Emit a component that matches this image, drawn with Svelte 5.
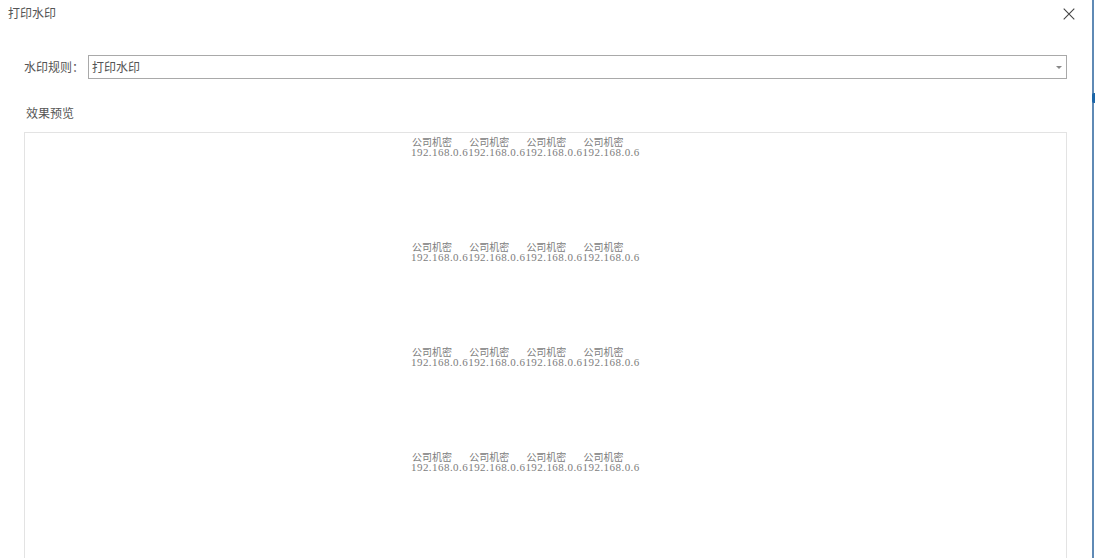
<script>
  const rows = [0, 1, 2, 3];
  const cols = [0, 1, 2, 3];
</script>

<div class="window">
  <div class="dialog">
    <header class="title-bar">
      <h1>打印水印</h1>
      <button class="close" aria-label="关闭">
        <svg width="12" height="12" viewBox="0 0 12 12"><path d="M.7.7l10.6 10.6M11.3.7L.7 11.3" /></svg>
      </button>
    </header>
    <div class="rule">
      <span class="label">水印规则：</span>
      <div class="select">
        <span>打印水印</span>
        <i class="caret"></i>
      </div>
    </div>
    <div class="preview-title">效果预览</div>
    <div class="preview">
      <div class="sheet">
        {#each rows as r}
          <div class="mark-row">
            {#each cols as c}
              <div class="mark"><span class="secret">公司机密</span><span class="ip">192.168.0.6</span></div>
            {/each}
          </div>
        {/each}
      </div>
    </div>
  </div>
  <div class="edge"><i class="knob"></i></div>
</div>

<style>
  :global(body) { margin: 0; background: #fff; overflow: hidden; }
  .window { display: flex; width: 1095px; height: 558px; overflow: hidden; }
  .dialog {
    width: 1092px;
    height: 558px;
    flex: none;
    box-sizing: border-box;
    font-family: "Noto Sans CJK SC", "Liberation Sans", sans-serif;
    color: #555;
    font-size: 12px;
    overflow: hidden;
  }
  .edge { width: 2px; flex: none; background: #5f8ab5; position: relative; }
  .knob { position: absolute; top: 93px; left: 0; width: 3px; height: 10px; background: #1c66a8; border-radius: 2px 0 0 2px; }
  .title-bar { display: flex; justify-content: space-between; align-items: center; height: 26px; padding: 0 17px 0 8px; }
  h1 { margin: 0; font-size: 12px; font-weight: 400; line-height: 26px; }
  .close { border: 0; background: none; padding: 0; width: 12px; height: 12px; display: flex; margin: 1px 0 0; }
  .close path { stroke: #444; stroke-width: 1.1; fill: none; }
  .rule { display: flex; align-items: center; margin: 29px 0 0 24px; width: 1043px; }
  .label { width: 64px; flex: none; line-height: 24px; }
  .select {
    flex: 1; height: 24px; box-sizing: border-box; border: 1px solid #a9a9a9;
    display: flex; align-items: center; justify-content: space-between; padding: 0 4px 0 3px;
    line-height: 22px;
  }
  .caret { width: 0; height: 0; border-left: 3px solid transparent; border-right: 3px solid transparent; border-top: 3px solid #888; }
  .preview-title { margin: 25px 0 0 26px; line-height: 18px; height: 18px; }
  .preview { margin: 10px 0 0 24px; width: 1043px; height: 500px; box-sizing: border-box; border: 1px solid #e3e3e3; border-bottom: 0; }
  .sheet { width: 232px; margin: 3px 0 0 386px; display: flex; flex-direction: column; gap: 83px; }
  .mark-row { display: flex; height: 22px; }
  .mark { width: 57.2px; flex: none; display: flex; flex-direction: column; color: #7d7d7d; }
  .secret { font-family: "Noto Sans CJK SC", sans-serif; font-size: 10px; line-height: 11px; height: 11px; padding-left: 1px; white-space: nowrap; }
  .ip { font-family: "Liberation Serif", serif; font-size: 11px; letter-spacing: 0.45px; line-height: 10px; height: 10px; white-space: nowrap; }
</style>
